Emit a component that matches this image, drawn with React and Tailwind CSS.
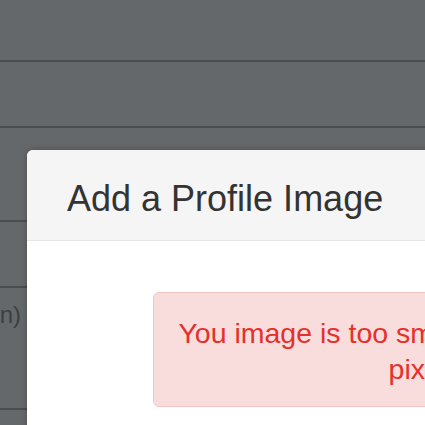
import React from "react";

const font = { fontFamily: '"Liberation Sans", Arial, sans-serif' };

function BackgroundList() {
  return (
    <div className="flex flex-col">
      <div className="h-[62px] border-b-2 border-[#4b4e51]" />
      <div className="h-[66px] border-b-2 border-[#4b4e51]" />
      <div className="h-[94px] border-b-2 border-[#4b4e51]" />
      <div className="h-[66px] border-b-2 border-[#4b4e51]" />
      <div className="h-[122px] border-b-2 border-[#4b4e51] pt-[12px]">
        <div className="flex w-[21px] justify-end overflow-hidden">
          <span className="whitespace-nowrap text-[24px] leading-[30px] text-[#3c3f42]">
            Profile Image (Admin)
          </span>
        </div>
      </div>
    </div>
  );
}

function ProfileModal() {
  return (
    <div className="absolute left-[27px] top-[150px] w-[820px] rounded-md bg-white shadow-[0_0_6px_rgba(0,0,0,0.25)] overflow-hidden">
      <div className="h-[91px] border-b border-[#e6e6e6] bg-[#f5f5f5] pl-[40px] pt-[29px]">
        <h2 className="text-[36px] leading-[1.1] text-[#333333] whitespace-nowrap">
          Add a Profile Image
        </h2>
      </div>
      <div className="pt-[51px] pl-[126px] pb-10">
        <div className="w-[552px] rounded-md border border-[#f3c6c6] bg-[#f9dddd] px-4 pt-[22px] pb-[19px] text-center text-[28.5px] leading-[36px] text-[#e5302b] whitespace-nowrap">
          You image is too small. Must be at least
          <br />
          pixels.
        </div>
      </div>
    </div>
  );
}

export default function App() {
  return (
    <div className="relative h-[425px] w-[425px] overflow-hidden bg-[#65686b]" style={font}>
      <BackgroundList />
      <ProfileModal />
    </div>
  );
}
